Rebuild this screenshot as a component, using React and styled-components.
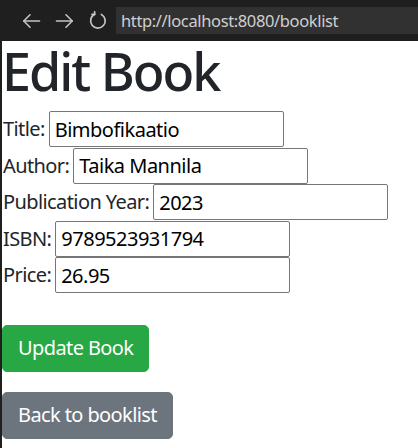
import React from "react";
import styled, { createGlobalStyle } from "styled-components";

const GlobalStyle = createGlobalStyle`
  html, body { margin: 0; padding: 0; background: #ffffff; }
  body { font-family: "Noto Sans", "Open Sans", sans-serif; color: #212529; }
  * { box-sizing: border-box; }
`;

const Window = styled.div`
  width: 418px;
  height: 448px;
  display: flex;
  flex-direction: column;
  overflow: hidden;
  background: #ffffff;
`;

const TopBar = styled.div`
  height: 41px;
  flex: none;
  background: #1f1f1f;
  display: flex;
  align-items: center;
  padding-left: 22px;
`;

const NavButton = styled.span`
  width: 19px;
  height: 19px;
  display: flex;
  align-items: center;
  justify-content: center;
  margin-right: ${(p) => p.$gap ?? 14}px;
  color: #c5c5c5;
`;

const UrlBox = styled.div`
  flex: 1;
  height: 27px;
  margin-left: 9px;
  background: #313131;
  display: flex;
  align-items: center;
  padding-left: 5px;
  font-family: "Noto Sans", sans-serif;
  font-size: 16.5px;
  letter-spacing: -0.37px;
  color: #cfcfcf;
  white-space: nowrap;
`;

const Page = styled.main`
  flex: 1;
  border-left: 2px solid #1f1f1f;
  padding: 0;
`;

const Heading = styled.h1`
  margin: 0 0 10px;
  font-size: 52px;
  line-height: 60px;
  font-weight: 500;
  color: #212529;
  letter-spacing: -2px;
`;

const Form = styled.form`
  display: flex;
  flex-direction: column;
  align-items: flex-start;
`;

const Row = styled.div`
  height: 36.5px;
  display: flex;
  align-items: flex-start;
  gap: 4px;
  font-size: 20px;
  line-height: 36px;
`;

const Label = styled.label`
  color: #212529;
  padding-left: 1px;
  letter-spacing: -0.6px;
`;

const Input = styled.input`
  width: 235px;
  height: 36px;
  border: 1px solid #767676;
  border-radius: 2px;
  padding: 0 5px;
  font-family: inherit;
  font-size: 20px;
  letter-spacing: -0.5px;
  color: #000000;
  background: #ffffff;
  outline: none;
`;

const Actions = styled.div`
  margin-top: 31px;
  display: flex;
  flex-direction: column;
  align-items: flex-start;
  gap: 20px;
`;

const Button = styled.button`
  height: 47px;
  padding: 0 15px;
  border: 1px solid ${(p) => p.$bg};
  background: ${(p) => p.$bg};
  color: #ffffff;
  border-radius: 5px;
  font-family: "Noto Sans", sans-serif;
  font-size: 20px;
  line-height: 30px;
  letter-spacing: -0.6px;
  cursor: pointer;
`;

const ArrowLeft = () => (
  <svg width="19" height="16" viewBox="0 0 19 16" fill="none" stroke="currentColor" strokeWidth="1.6" strokeLinecap="round" strokeLinejoin="round">
    <path d="M17.5 8H1.8" />
    <path d="M8 1.8L1.8 8L8 14.2" />
  </svg>
);

const ArrowRight = () => (
  <svg width="19" height="16" viewBox="0 0 19 16" fill="none" stroke="currentColor" strokeWidth="1.6" strokeLinecap="round" strokeLinejoin="round">
    <path d="M1.5 8H17.2" />
    <path d="M11 1.8L17.2 8L11 14.2" />
  </svg>
);

const Reload = () => (
  <svg width="19" height="19" viewBox="0 0 19 19" fill="none" stroke="currentColor" strokeWidth="1.7" strokeLinecap="round" strokeLinejoin="round">
    <path d="M6.8 3.2A7.3 7.3 0 1 0 13.4 3.4" />
    <path d="M6.6 0.8V3.4H4" />
  </svg>
);

const fields = [
  { label: "Title:", value: "Bimbofikaatio" },
  { label: "Author:", value: "Taika Mannila" },
  { label: "Publication Year:", value: "2023" },
  { label: "ISBN:", value: "9789523931794" },
  { label: "Price:", value: "26.95" },
];

export default function App() {
  return (
    <>
      <GlobalStyle />
      <Window>
        <TopBar>
          <NavButton><ArrowLeft /></NavButton>
          <NavButton><ArrowRight /></NavButton>
          <NavButton $gap={0}><Reload /></NavButton>
          <UrlBox>http://localhost:8080/booklist</UrlBox>
        </TopBar>
        <Page>
          <Heading>Edit Book</Heading>
          <Form onSubmit={(e) => e.preventDefault()}>
            {fields.map((f) => (
              <Row key={f.label}>
                <Label>{f.label}</Label>
                <Input defaultValue={f.value} />
              </Row>
            ))}
            <Actions>
              <Button type="submit" $bg="#28a745">Update Book</Button>
              <Button type="button" $bg="#6c757d">Back to booklist</Button>
            </Actions>
          </Form>
        </Page>
      </Window>
    </>
  );
}
